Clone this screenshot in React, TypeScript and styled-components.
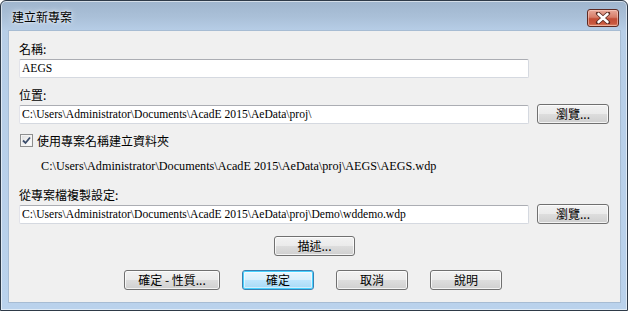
import React from 'react'
import styled, { createGlobalStyle, css } from 'styled-components'

const GlobalStyle = createGlobalStyle`
  html, body {
    margin: 0;
    padding: 0;
    background: #ffffff;
  }
  body {
    font-family: "Noto Sans CJK TC", "Liberation Sans", sans-serif;
    font-size: 12px;
    color: #000000;
  }
`

const sansFont = `"Noto Sans CJK TC", "Liberation Sans", sans-serif`
const serifFont = `"Liberation Serif", "Noto Sans CJK TC", serif`

const Window = styled.div`
  box-sizing: border-box;
  width: 628px;
  height: 311px;
  display: flex;
  flex-direction: column;
  border: 1px solid #2e3a48;
  border-radius: 6px 6px 0 0;
  background: linear-gradient(180deg, #9fb5cd 0px, #aac0d8 16px, #b7cee7 30px, #bad2ec 100%);
  box-shadow: inset 0 0 0 1px rgba(255, 255, 255, 0.55);
`

const TitleBar = styled.div`
  height: 29px;
  display: flex;
  align-items: center;
  justify-content: space-between;
  padding: 0 8px 0 11px;
  flex-shrink: 0;
`

const Title = styled.span`
  font-family: ${sansFont};
  font-size: 12px;
  line-height: 14px;
  color: #000000;
  margin-top: 3px;
  text-shadow: 0 0 6px rgba(255, 255, 255, 0.9), 0 0 3px rgba(255, 255, 255, 0.9);
`

const CloseButton = styled.div`
  box-sizing: border-box;
  width: 32px;
  height: 18px;
  margin-top: 4px;
  border: 1px solid #5e2a22;
  border-radius: 3px;
  background: linear-gradient(180deg, #e9a99a 0%, #d77d69 45%, #c24d36 55%, #c9583f 85%, #dc8a6c 100%);
  box-shadow: inset 0 0 0 1px rgba(255, 220, 210, 0.5);
  display: flex;
  align-items: center;
  justify-content: center;
`

const Client = styled.div`
  flex: 1;
  margin: 0 6px 7px 7px;
  background: #f0f0f0;
  border: 1px solid #a7bcd3;
  display: flex;
  flex-direction: column;
  padding: 10px 0 0 10px;
`

const Label = styled.div<{ $top?: number }>`
  font-family: ${sansFont};
  font-size: 12px;
  line-height: 16px;
  margin-top: ${({ $top }) => $top ?? 0}px;
  color: #000000;
`

const FieldRow = styled.div<{ $top: number }>`
  display: flex;
  align-items: center;
  gap: 8px;
  margin-top: ${({ $top }) => $top}px;
`

const TextBox = styled.div`
  box-sizing: border-box;
  width: 510px;
  height: 19px;
  border: 1px solid #d5d9e0;
  border-top-color: #abadb3;
  border-left-color: #e2e3ea;
  border-radius: 2px;
  background: #ffffff;
  font-family: ${serifFont};
  font-size: 11.6px;
  line-height: 17px;
  padding: 0 2px;
  white-space: nowrap;
  overflow: hidden;
`

const Button = styled.div<{ $width: number; $primary?: boolean }>`
  box-sizing: border-box;
  width: ${({ $width }) => $width}px;
  height: 20px;
  border: 1px solid #707070;
  border-radius: 3px;
  background: linear-gradient(180deg, #f2f2f2 0%, #ebebeb 48%, #dddddd 52%, #cfcfcf 100%);
  box-shadow: inset 0 0 0 1px rgba(255, 255, 255, 0.75);
  font-family: ${sansFont};
  font-size: 12px;
  line-height: 18px;
  text-align: center;
  color: #000000;
  ${({ $primary }) =>
    $primary &&
    css`
      border-color: #3c7fb1;
      box-shadow: inset 0 0 0 1px #48d2ff, inset 0 0 0 2px rgba(255, 255, 255, 0.5);
      background: linear-gradient(180deg, #eaf6fd 0%, #d9f0fc 48%, #bee6fd 52%, #a7d9f5 100%);
    `}
`

const CheckRow = styled.div`
  display: flex;
  align-items: center;
  gap: 4px;
  margin-top: 8px;
  margin-left: 1px;
`

const CheckBox = styled.div`
  box-sizing: border-box;
  width: 13px;
  height: 13px;
  border: 1px solid #8e8f8f;
  background: linear-gradient(135deg, #dcdcdc 0%, #f4f4f4 60%, #ffffff 100%);
  box-shadow: inset 0 0 0 1px #f4f4f4;
  display: flex;
  align-items: center;
  justify-content: center;
`

const PathNote = styled.div`
  font-family: ${serifFont};
  font-size: 12.2px;
  line-height: 16px;
  margin-top: 9px;
  margin-left: 22px;
`

const CenterRow = styled.div`
  display: flex;
  justify-content: center;
  margin-top: 12px;
  padding-right: 10px;
`

const ButtonRow = styled.div`
  display: flex;
  gap: 22px;
  margin-top: 14px;
  margin-left: 105px;
`

export default function App() {
  return (
    <>
      <GlobalStyle />
      <Window>
        <TitleBar>
          <Title>建立新專案</Title>
          <CloseButton>
            <svg width="16" height="12" viewBox="0 0 16 12">
              <path
                d="M3 1.5 L13 10.5 M13 1.5 L3 10.5"
                stroke="#5a2a22"
                strokeWidth="4.2"
                strokeLinecap="round"
                fill="none"
              />
              <path
                d="M3.5 2 L12.5 10 M12.5 2 L3.5 10"
                stroke="#ffffff"
                strokeWidth="2.6"
                strokeLinecap="round"
                fill="none"
              />
            </svg>
          </CloseButton>
        </TitleBar>
        <Client>
          <Label>名稱:</Label>
          <FieldRow $top={2}>
            <TextBox>AEGS</TextBox>
          </FieldRow>
          <Label $top={9}>位置:</Label>
          <FieldRow $top={1}>
            <TextBox>C:\Users\Administrator\Documents\AcadE 2015\AeData\proj\</TextBox>
            <Button $width={72}>瀏覽...</Button>
          </FieldRow>
          <CheckRow>
            <CheckBox>
              <svg width="9" height="9" viewBox="0 0 9 9">
                <path d="M1 4.5 L3.5 7 L8 1.5" stroke="#3b4d6b" strokeWidth="1.8" fill="none" />
              </svg>
            </CheckBox>
            <span>使用專案名稱建立資料夾</span>
          </CheckRow>
          <PathNote>C:\Users\Administrator\Documents\AcadE 2015\AeData\proj\AEGS\AEGS.wdp</PathNote>
          <Label $top={13}>從專案檔複製設定:</Label>
          <FieldRow $top={1}>
            <TextBox>C:\Users\Administrator\Documents\AcadE 2015\AeData\proj\Demo\wddemo.wdp</TextBox>
            <Button $width={72}>瀏覽...</Button>
          </FieldRow>
          <CenterRow>
            <Button $width={81}>描述...</Button>
          </CenterRow>
          <ButtonRow>
            <Button $width={96}>確定 - 性質...</Button>
            <Button $width={72} $primary>確定</Button>
            <Button $width={72}>取消</Button>
            <Button $width={72}>說明</Button>
          </ButtonRow>
        </Client>
      </Window>
    </>
  )
}
